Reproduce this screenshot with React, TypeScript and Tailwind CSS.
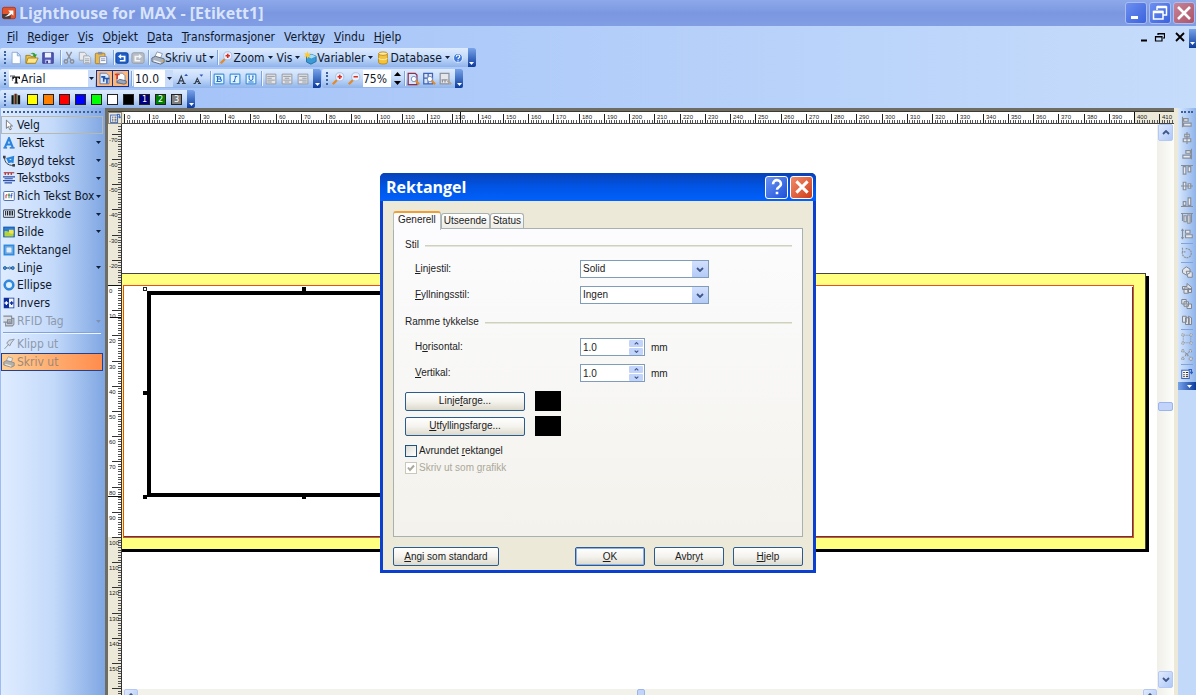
import { useState, type ReactNode } from "react";

const UI_FONT = "font-['DejaVu_Sans_Condensed','Noto_Sans',sans-serif]";

const menus = [
  ["", "F", "il"],
  ["", "R", "ediger"],
  ["", "V", "is"],
  ["", "O", "bjekt"],
  ["", "D", "ata"],
  ["", "T", "ransformasjoner"],
  ["Verkt", "ø", "y"],
  ["", "V", "indu"],
  ["", "H", "jelp"],
];

const tools = [
  { label: "Velg", icon: "pointer", active: true },
  { label: "Tekst", icon: "text", menu: true },
  { label: "Bøyd tekst", icon: "curved", menu: true },
  { label: "Tekstboks", icon: "textbox", menu: true },
  { label: "Rich Tekst Box", icon: "rtf", menu: true },
  { label: "Strekkode", icon: "barcode", menu: true },
  { label: "Bilde", icon: "image", menu: true },
  { label: "Rektangel", icon: "rect" },
  { label: "Linje", icon: "line", menu: true },
  { label: "Ellipse", icon: "ellipse" },
  { label: "Invers", icon: "invers" },
  { label: "RFID Tag", icon: "rfid", menu: true, disabled: true },
];

const swatches = [
  { name: "Gul", color: "bg-[#ffff00]" },
  { name: "Oransje", color: "bg-[#ff8000]" },
  { name: "Rød", color: "bg-[#ff0000]" },
  { name: "Blå", color: "bg-[#0000ff]" },
  { name: "Grønn", color: "bg-[#00ff00]" },
  { name: "Hvit", color: "bg-white" },
  { name: "Svart", color: "bg-black" },
  { name: "Farge 1", color: "bg-[#000080]", digit: "1" },
  { name: "Farge 2", color: "bg-[#008000]", digit: "2" },
  { name: "Farge 3", color: "bg-[#808080]", digit: "3" },
];

const rightTools = [
  "alignLeft", "alignCenter", "alignRight", "alignTop", "alignMiddle", "alignBottom", "spaceH", "spaceV", "|",
  "rotate", "|", "front", "forward", "backward", "back", "|", "group", "ungroup", "|", "props",
];

const drawings: Record<string, ReactNode> = {
  app: (
    <>
      <rect x="0.5" y="1.5" width="15" height="13" rx="2" fill="#e2552d" stroke="#a63a22" />
      <path d="M0 9h10v5.500H2L0 13z" fill="#4a3a38" />
      <path d="M3 12c3-1 5-3 6-5L7 5h6v6l-2-2c-2 2-5 3-8 3z" fill="#fff" />
    </>
  ),
  new: <path d="M3.500 1.500h6l3.500 3.500v9.500h-9.500zM9.500 1.500v4h3.500" fill="#fbfdff" stroke="#8aa6cf" />,
  open: (
    <>
      <path d="M1 5h5l1 1.500h5V14H1z" fill="#e8c24a" stroke="#9b7a1d" />
      <path d="M3.500 8H15l-3 6H1.500z" fill="#ffe58a" stroke="#a5821f" />
      <path d="M6 3c3-2 5-1 6 1h2l-3 3.500L8.500 4H10C9 3 8 3 6 3z" fill="#2ca02c" />
    </>
  ),
  save: (
    <>
      <path d="M2 2h12v12H2z" fill="#5258b8" stroke="#33378c" />
      <path d="M4.500 2h7v5.500h-7z" fill="#eef2ff" />
      <path d="M5 10h6v4H5z" fill="#d9dcf2" />
      <path d="M6 11h2v3H6z" fill="#33378c" />
    </>
  ),
  cut: (
    <g fill="none" stroke="#8a8f99" strokeWidth="1.600">
      <path d="M5 1l5 9M11 1L6 10" />
      <circle cx="4.500" cy="12" r="2" />
      <circle cx="11.500" cy="12" r="2" />
    </g>
  ),
  copy: (
    <g fill="#e8eaee" stroke="#9da3ad">
      <path d="M1.500 1.500h6l2 2v7h-8z" />
      <path d="M6.500 5.500h6l2 2v7h-8zM8 9h5M8 11h5M8 13h5" />
    </g>
  ),
  paste: (
    <>
      <rect x="1.500" y="2.500" width="11" height="12" rx="1" fill="#e9b94b" stroke="#a87a22" />
      <rect x="4.500" y="1" width="5" height="3" fill="#888fa5" />
      <path d="M6.500 6.500h8v8h-8zM8 9h5M8 11h5" fill="#fff" stroke="#7286b5" />
    </>
  ),
  undo: (
    <>
      <rect x="1" y="2" width="14" height="12" rx="2" fill="#1d5fc8" stroke="#0b3b96" />
      <path d="M7 3.500L3.500 6.200 7 9V7.200h3v3H5.500v1.800H12V5.300H7z" fill="#fff" />
    </>
  ),
  redo: (
    <>
      <rect x="1" y="2" width="14" height="12" rx="2" fill="#b9bec6" stroke="#9399a3" />
      <path d="M9 3.500l3.500 2.700L9 9V7.200H6v3h4.500v1.800H4V5.300h5z" fill="#f3f4f6" />
    </>
  ),
  printer: (
    <>
      <path d="M4 7l3-6 6 2-2 5z" fill="#fff" stroke="#8491aa" />
      <path d="M1 8l4-2 10 3v4l-4 2-10-3z" fill="#aab3c2" stroke="#5e6878" />
      <path d="M3 11l8 2.500" stroke="#f4f6fa" strokeWidth="1.500" />
      <circle cx="13" cy="11" r="1" fill="#e0a92a" />
    </>
  ),
  zoomIn: (
    <>
      <path d="M2 14l5-5" stroke="#e48a2b" strokeWidth="2.600" />
      <circle cx="10" cy="5.500" r="4.700" fill="#e6f0ff" stroke="#a9bbd8" />
      <path d="M10 3v5M7.500 5.500h5" stroke="#e02a1a" strokeWidth="1.800" />
    </>
  ),
  zoomOut: (
    <>
      <path d="M2 14l5-5" stroke="#e48a2b" strokeWidth="2.600" />
      <circle cx="10" cy="5.500" r="4.700" fill="#e6f0ff" stroke="#a9bbd8" />
      <path d="M7.500 5.500h5" stroke="#e02a1a" strokeWidth="1.800" />
    </>
  ),
  cube: (
    <>
      <path d="M4 6l6-2 5 2v6l-6 3-5-2.500z" fill="#3c9ad6" stroke="#1f6ea6" />
      <path d="M4 6l5.500 2.500L15 6l-5-2z" fill="#a5def5" />
      <path d="M5 0l1 3 3-1-2 3 2 2-3-.5L5 9 4 6 1 7l2-2.500L1 2l3 1z" fill="#ffc928" />
    </>
  ),
  db: (
    <>
      <path d="M3 3v10c0 2.500 10 2.500 10 0V3z" fill="#f4c33a" stroke="#b98613" />
      <ellipse cx="8" cy="3" rx="5" ry="2" fill="#ffeaa0" stroke="#b98613" />
      <path d="M3 8c0 2.500 10 2.500 10 0" fill="none" stroke="#fff1b8" />
    </>
  ),
  help: (
    <>
      <circle cx="8" cy="8" r="6" fill="#3f78d8" stroke="#dbe8fc" strokeWidth="1.500" />
      <path d="M5.800 6.200c0-3 4.600-2.800 4.600 0 0 1.600-2.300 1.600-2.300 3.300M8 11v1.500" fill="none" stroke="#fff" strokeWidth="1.600" />
    </>
  ),
  fontType: (
    <>
      <path d="M0 2h8v3H7L6 4H5v7H3V4H2L1 5H0z" fill="#8b9099" />
      <path d="M4 4h12v4h-1.500L13 6h-1.500v7.500H13V15H7v-1.500h1.500V6H7L5.500 8H4z" fill="#111" />
    </>
  ),
  fontPage: (
    <>
      <path d="M2.500 1.500h8l3 3v10h-11z" fill="#dfeaff" stroke="#4a73b9" />
      <path d="M4 5h5v2H8v5H6V7H4zM8 7h6v2h-2v5h-2V9H8z" fill="#2456a8" />
    </>
  ),
  fontPrint: (
    <>
      <path d="M3.500 1.500h7l3 3v9h-10z" fill="#fff" stroke="#6a7fae" />
      <path d="M1 2h6v2H5v5H3V4H1z" fill="#d33b24" />
      <path d="M4 11l3-2 8 2v3l-3 1-8-2z" fill="#9aa6ba" stroke="#50607c" />
    </>
  ),
  grow: (
    <>
      <path d="M1 14h4M8 14h5M3 14L7 4l4 10M5 10.500h4.500" stroke="#333b4a" strokeWidth="1.600" fill="none" />
      <path d="M11 4l2.500-3L16 4z" fill="#2c57b5" />
    </>
  ),
  shrink: (
    <>
      <path d="M2 14h3M8 14h4M4 14L7 7l3.500 7M5.500 11.500h3.500" stroke="#333b4a" strokeWidth="1.400" fill="none" />
      <path d="M10 2h5l-2.500 3z" fill="#2c57b5" />
    </>
  ),
  bold: (
    <>
      <rect x="1.500" y="1.500" width="13" height="13" rx="1" fill="#e6f3ff" stroke="#3f93dd" strokeWidth="1.600" />
      <path d="M6 4.500v7M6 5h2.500c2.500 0 2.500 3 0 3H6h3c3 0 3 3.300 0 3.300H6M4.500 4.700h2M4.500 11.300h2" fill="none" stroke="#1f6fc4" strokeWidth="1.500" />
    </>
  ),
  italic: (
    <>
      <rect x="1.500" y="1.500" width="13" height="13" rx="1" fill="#e6f3ff" stroke="#3f93dd" strokeWidth="1.600" />
      <path d="M9 4.500l-2 7M7.500 4.500h3.500M5 11.500h3.500" fill="none" stroke="#1f6fc4" strokeWidth="1.300" />
    </>
  ),
  underline: (
    <>
      <rect x="1.500" y="1.500" width="13" height="13" rx="1" fill="#e6f3ff" stroke="#3f93dd" strokeWidth="1.600" />
      <path d="M5.500 4v4c0 2.500 5 2.500 5 0V4M4.500 12h7M4.500 4h2M9.500 4h2" fill="none" stroke="#1f6fc4" strokeWidth="1.300" />
    </>
  ),
  left: <path d="M1.500 1.500h13v13h-13zM3 4.500h10M3 7h6M3 9.500h10M3 12h6" fill="#e3e5e9" stroke="#8f949e" strokeWidth="1.200" />,
  center: <path d="M1.500 1.500h13v13h-13zM3 4.500h10M5 7h6M3 9.500h10M5 12h6" fill="#e3e5e9" stroke="#8f949e" strokeWidth="1.200" />,
  right: <path d="M1.500 1.500h13v13h-13zM3 4.500h10M7 7h6M3 9.500h10M7 12h6" fill="#e3e5e9" stroke="#8f949e" strokeWidth="1.200" />,
  fitPage: (
    <>
      <path d="M2.500 1.500h8l2 2v11h-10z" fill="#dbe6fb" stroke="#8a2f4c" strokeWidth="1.400" />
      <circle cx="9" cy="8" r="3" fill="#fff" stroke="#6c86bd" />
      <path d="M11 10l4 4" stroke="#e08a2a" strokeWidth="2.500" />
    </>
  ),
  fitObjects: (
    <>
      <path d="M2 1.500h10v12H2zM2 7h10M7 2v11" fill="#dbe6fb" stroke="#3d62b4" strokeWidth="1.400" />
      <circle cx="9" cy="8" r="3" fill="#fff" stroke="#6c86bd" />
      <path d="M11 10l4 4" stroke="#e08a2a" strokeWidth="2.500" />
    </>
  ),
  fitOff: (
    <>
      <path d="M2.500 1.500h10v12h-10zM4 9h7M5 9v3M8 9v3" fill="#e4e6ea" stroke="#8f939c" strokeWidth="1.400" />
      <path d="M11 10l4 4" stroke="#b0a698" strokeWidth="2.500" />
    </>
  ),
  pens: (
    <g strokeWidth="3">
      <path d="M3.500 3v12" stroke="#111" />
      <path d="M7.500 1v14" stroke="#7a1111" />
      <path d="M12 3v12" stroke="#111" />
      <path d="M5.500 2v13M10 2v13" stroke="#2d8a3a" strokeWidth="1" />
    </g>
  ),
  pointer: <path d="M4.500 1.500v11l2.700-2.500 2 4.500 2-1-2-4.200h3.500z" fill="#fff" stroke="#555" />,
  text: (
    <>
      <path d="M0.500 14.500h5M9 14.500h6.500" stroke="#1766c0" strokeWidth="1.600" />
      <path d="M2.500 14L8 1.500 13 14M4.500 10h7" fill="none" stroke="#2a86dd" strokeWidth="2.800" />
    </>
  ),
  curved: (
    <>
      <path d="M2 3c0 7 4 11 12 11" fill="none" stroke="#3a4148" strokeWidth="1.300" />
      <rect x="0" y="1" width="3.500" height="3.500" fill="#3a4148" />
      <rect x="12.500" y="12" width="3.500" height="3.500" fill="#3a4148" />
      <path d="M4 4l11-3-1 10-3-1-4 1-1-3z" fill="#2a86dd" />
      <path d="M8 6l3-1v2z" fill="#d8ecff" />
    </>
  ),
  textbox: (
    <>
      <path d="M1 1h14M3 1v3M7 1v3M11 1v3" stroke="#a5262c" strokeWidth="1.500" />
      <path d="M0 6.500h16M2 9h11M0 11.500h16M2 14.500h10" stroke="#2b4fa8" strokeWidth="1.500" />
    </>
  ),
  rtf: (
    <>
      <rect x="1" y="2" width="14" height="12" rx="1" fill="#fff" stroke="#4a6fb0" strokeWidth="1.300" />
      <path d="M4 11V6.500h2" fill="none" stroke="#c4302b" strokeWidth="1.300" />
      <path d="M8 4.500V11M6.800 6.800h2.500" stroke="#257a33" strokeWidth="1.200" />
      <path d="M11 11V5h2M10 7.500h2.500" fill="none" stroke="#2b55c0" strokeWidth="1.200" />
    </>
  ),
  barcode: (
    <>
      <rect x="0.700" y="2.500" width="14.600" height="10" rx="1" fill="#e5ebf5" stroke="#4e5a72" strokeWidth="1.400" />
      <path d="M3.500 4v6M6 4v6M8.500 4v6M10.500 4v6M12.700 4v6" stroke="#20262f" strokeWidth="1.400" />
    </>
  ),
  image: (
    <>
      <rect x="1" y="1.500" width="14" height="13" fill="#2a7ed8" stroke="#1253a5" strokeWidth="1.300" />
      <path d="M2 7c4-2 7 3 12-1v8H2z" fill="#b5d33d" />
      <path d="M8 5h6v5c-2 1-4 0-6-1z" fill="#f4e14b" />
    </>
  ),
  rect: (
    <>
      <rect x="2" y="2" width="12" height="12" fill="#dceeff" stroke="#2f8ce0" strokeWidth="2.600" />
      <rect x="4" y="4" width="8" height="8" fill="none" stroke="#1c5fae" strokeWidth="0.700" />
    </>
  ),
  line: (
    <>
      <path d="M2 8h12" stroke="#1f5fa8" strokeWidth="1.500" />
      <circle cx="2.500" cy="8" r="2" fill="#3f93dd" stroke="#174c8c" />
      <circle cx="13" cy="8" r="2" fill="#3f93dd" stroke="#174c8c" />
      <circle cx="9" cy="8" r="1.400" fill="#fff" stroke="#174c8c" />
    </>
  ),
  ellipse: (
    <>
      <circle cx="8" cy="8" r="5.500" fill="#e3f2ff" stroke="#2f8ce0" strokeWidth="3" />
      <circle cx="8" cy="8" r="7" fill="none" stroke="#1c6ec2" strokeWidth="0.700" />
    </>
  ),
  invers: (
    <>
      <rect x="1" y="1" width="14" height="14" fill="#0c2f9c" />
      <path d="M8 2h6v12H8z" fill="#f3f7ff" />
      <path d="M2 8h5M4.500 5.500v5" stroke="#fff" strokeWidth="1.700" />
      <path d="M9 8h5M11.500 5.500v5" stroke="#0c2f9c" strokeWidth="1.700" />
    </>
  ),
  rfid: (
    <g fill="#d8dde6" stroke="#838b98" strokeWidth="1.400">
      <path d="M3.500 4.500h11v8l-2 2h-9z" />
      <path d="M0.500 1.500h11v8H0.500M6 6.500h6v5H6zM8 9h2" />
    </g>
  ),
  clip: <path d="M2 14.500L8 8M5 7l3-4 7-1.500-4 5-2 4z" fill="#d5dbe6" stroke="#8d96a4" strokeWidth="1.300" />,
  printOff: (
    <>
      <path d="M4 7l3-6 6 2-2 5z" fill="#eceae6" stroke="#9a9a9a" />
      <path d="M1 8l4-2 10 3v4l-4 2-10-3z" fill="#b4b0aa" stroke="#858585" />
      <path d="M3 11l8 2.500" stroke="#ece8e2" strokeWidth="1.500" />
    </>
  ),
  alignLeft: <path d="M2 1v14M3.500 3.500h6v3.500h-6zM3.500 9.500h10v4h-10z" fill="#e6e9ee" stroke="#868d99" strokeWidth="1.500" />,
  alignCenter: <path d="M8 0v16M5 3h6v3.500H5zM3 9h10v4H3z" fill="#e6e9ee" stroke="#868d99" strokeWidth="1.500" />,
  alignRight: <path d="M14 1v14M6.500 3.500h6v3.500h-6zM2.500 9.500h10v4h-10z" fill="#e6e9ee" stroke="#868d99" strokeWidth="1.500" />,
  alignTop: <path d="M0 2h16M3 3.500h3.500v10H3zM9.500 3.500H13v7H9.500z" fill="#e6e9ee" stroke="#868d99" strokeWidth="1.500" />,
  alignMiddle: <path d="M0 8h16M3 3h3.500v10H3zM9.500 5H13v6H9.500z" fill="#e6e9ee" stroke="#868d99" strokeWidth="1.500" />,
  alignBottom: <path d="M0 14h16M3 7.500h3.500v5H3zM9.500 2.500H13v10H9.500z" fill="#e6e9ee" stroke="#868d99" strokeWidth="1.500" />,
  spaceH: <path d="M0 2h16M2 2v10M14 2v12M4 5h3v8H4zM9 4h3v11H9z" fill="#e6e9ee" stroke="#868d99" strokeWidth="1.500" />,
  spaceV: <path d="M2 1v14M0 3h4M0 13h4M6 3h6v4H6zM6 9h9v4H6z" fill="#e6e9ee" stroke="#868d99" strokeWidth="1.500" />,
  rotate: <path d="M2 6.500a6 6 0 1 0 4-4M2 1v5.500h5" fill="none" stroke="#8a919d" strokeWidth="1.500" strokeDasharray="2.500 1" />,
  front: <path d="M2 5l5-4 5 3v5l-5 3-5-3zM7 7h6l2 2v6H9z" fill="#e2e5ea" stroke="#7d8490" strokeWidth="1.300" />,
  forward: <path d="M2 6h6V2l6 5v3H2zM4 8h6v7H4zM9 9h5v5H9z" fill="#e2e5ea" stroke="#7d8490" strokeWidth="1.300" />,
  backward: <path d="M1 2h6v6H1zM4 5h6v6H4zM8 8h6v6H8z" fill="#e2e5ea" stroke="#7d8490" strokeWidth="1.300" />,
  back: <path d="M2 3h5v8H2zM6 5h5v9H6zM10 3l4 2v9h-4z" fill="#e2e5ea" stroke="#7d8490" strokeWidth="1.300" />,
  group: <path d="M1 1h3v3H1zM12 1h3v3h-3zM1 12h3v3H1zM12 12h3v3h-3zM4 3h8M3 4v8M13 4v8M4 13h8" fill="#d5dae2" stroke="#8a919d" strokeDasharray="2 1" />,
  ungroup: <path d="M1 1h3v3H1zM11 1h3v3h-3zM1 11h3v3H1zM6 6h3v3H6zM11 11h4v4h-4zM5 4l6 6M11 4l-6 6" fill="#d5dae2" stroke="#7d8490" strokeDasharray="3 1" />,
  props: (
    <>
      <rect x="1" y="3" width="10" height="11" fill="#fff" stroke="#3d66b8" strokeWidth="1.400" />
      <path d="M3 6h2M3 9h2M3 11.500h2M6.500 6h3M6.500 9h3M6.500 11.500h3" stroke="#222" strokeWidth="1.300" />
      <path d="M10 2h4v5M12 5l2 2.500L16 5" fill="none" stroke="#2b5cc2" strokeWidth="1.400" />
    </>
  ),
};

function Icon({ name, className = "size-[14px]" }: { name: string; className?: string }) {
  return (
    <svg viewBox="0 0 16 16" className={`${className} shrink-0`} aria-hidden="true">
      {drawings[name]}
    </svg>
  );
}

function Caret({ className = "text-[#10203c]" }: { className?: string }) {
  return (
    <svg viewBox="0 0 5 3" className={`${className} h-[3px] w-[5px] shrink-0`} aria-hidden="true">
      <path d="M0 0h5L2.500 3z" fill="currentColor" />
    </svg>
  );
}

function ToolButton({ name, label, small = false }: { name: string; label: string; small?: boolean }) {
  return (
    <button aria-label={label} className="flex h-4 w-4 shrink-0 items-center justify-center">
      <Icon name={name} className={small ? "size-[12px]" : "size-[14px]"} />
    </button>
  );
}

function LabelButton({ icon, children }: { icon?: string; children: ReactNode }) {
  return (
    <button className="flex h-4 shrink-0 items-center whitespace-nowrap">
      {icon && <Icon name={icon} />}
      <span className="mr-[3px]">{children}</span>
      <Caret />
    </button>
  );
}

function Separator() {
  return <span className="h-[15px] w-px shrink-0 bg-[#7fa3dc] shadow-[1px_0_0_#eef5ff]" />;
}

function Grip() {
  return <span className="mr-[2px] h-[13px] shrink-0 border-l-2 border-dotted border-[#3c5f9e]" />;
}

function Toolbar({ label, children }: { label: string; children: ReactNode }) {
  return (
    <div
      role="toolbar"
      aria-label={label}
      className="flex h-full items-stretch overflow-hidden rounded-[2px] bg-gradient-to-b from-[#deebfd] via-[#c3dafa] to-[#8fb3ea]"
    >
      <div className="flex items-center pl-1">{children}</div>
      <button
        aria-label="Flere knapper"
        className="ml-[2px] flex w-2 items-end justify-center bg-gradient-to-b from-[#79a4ea] to-[#0b3a9b] pb-[2px] text-white"
      >
        <Caret className="text-white" />
      </button>
    </div>
  );
}

function Hot({ parts }: { parts: string[] }) {
  return (
    <>
      {parts[0]}
      <u className="underline-offset-1">{parts[1]}</u>
      {parts[2]}
    </>
  );
}

function TopRuler() {
  const origin = 2;
  const unit = 2.525;
  const ticks = Array.from({ length: 600 }, (_, i) => i);
  return (
    <svg className="h-[12px] min-w-0 flex-1" aria-hidden="true" shapeRendering="crispEdges">
      <rect width="100%" height="12" fill="#ece9d8" />
      <rect x={origin} width={unit * 400} height="12" fill="#fff" />
      {ticks.map((i) => (
        <path key={i} d={`M${Math.round(origin + i * unit)}.5 ${i % 10 === 0 ? 2 : 8}V11`} stroke={i % 10 === 0 ? "#222" : "#555"} />
      ))}
      {ticks
        .filter((i) => i % 10 === 0 && i <= 410)
        .map((i) => (
          <text key={i} x={Math.round(origin + i * unit) + 3} y="7" fontSize="6" fill="#222" className="font-['Liberation_Sans',sans-serif]">
            {i}
          </text>
        ))}
      <path d={`M${origin + unit * 400} 0V12M338.5 0V11`} stroke="#111" />
      <path d="M0 11.500H3000" stroke="#444" />
    </svg>
  );
}

function SideRuler() {
  const origin = 161;
  const unit = 2.52;
  const ticks = Array.from({ length: 500 }, (_, i) => i - 63);
  return (
    <svg className="h-full w-[14px] shrink-0" aria-hidden="true" shapeRendering="crispEdges">
      <rect width="14" height="100%" fill="#ece9d8" />
      <rect y={origin} width="14" height={unit * 100} fill="#fff" />
      {ticks.map((i) => (
        <path key={i} d={`M${i % 10 === 0 ? 4 : 10} ${Math.round(origin + i * unit)}.5H13`} stroke={i % 10 === 0 ? "#333" : "#555"} />
      ))}
      {ticks
        .filter((i) => i % 10 === 0 && i <= 150)
        .map((i) => (
          <text key={i} x="1" y={Math.round(origin + i * unit) + 8} fontSize="6" fill="#222" className="font-['Liberation_Sans',sans-serif]">
            {i < 0 ? i - 10 : i}
          </text>
        ))}
      <path d={`M0 ${origin}.5H14M2 ${origin + 32}.5H14M0 ${origin + 211}.5H14`} stroke="#111" />
      <path d="M13.500 0V3000" stroke="#333" />
    </svg>
  );
}

// The label sheet with the selected rectangle and its handles
function LabelSheet() {
  return (
    <svg className="absolute left-0 top-0 h-[430px] w-[1030px]" role="img" aria-label="Etikett1" shapeRendering="crispEdges">
      <rect x="0" y="152" width="1027" height="276" fill="#000" />
      <rect x="0" y="150" width="1023" height="275" fill="#ffff80" />
      <path d="M0 149.500H1023.500V425" fill="none" stroke="#444" />
      <rect x="2" y="162" width="1010" height="251" fill="#fff" />
      <path d="M2 412.500H1010.500V163" fill="none" stroke="#444" />
      <rect x="1.500" y="161.500" width="1010" height="252" fill="none" stroke="#f04a24" />
      <rect x="26.500" y="168.500" width="312" height="202" fill="none" stroke="#000" strokeWidth="4" />
      <rect x="21.500" y="163.500" width="3" height="3" fill="#fff" stroke="#222" />
      <rect x="180" y="163" width="4" height="4" />
      <rect x="21" y="267" width="4" height="4" />
      <rect x="21" y="371" width="4" height="4" />
      <rect x="180" y="371" width="4" height="4" />
    </svg>
  );
}

function Chevron({ up = false, className = "h-[5px] w-[8px]" }: { up?: boolean; className?: string }) {
  return (
    <svg viewBox="0 0 8 5" className={className} aria-hidden="true">
      <path d={up ? "M1 4l3-3 3 3" : "M1 1l3 3 3-3"} fill="none" stroke="#3f5788" strokeWidth="1.800" />
    </svg>
  );
}

const scrollButton = "flex items-center justify-center rounded-[2px] border border-[#b3c8f5] bg-gradient-to-br from-[#e1eafe] to-[#aec8f7]";

function GroupTitle({ children }: { children: ReactNode }) {
  return (
    <div className="flex h-4 items-center gap-[6px]">
      <h2>{children}</h2>
      <span className="h-px flex-1 bg-[#d0d0bf] shadow-[0_1px_0_#e6e5da]" />
    </div>
  );
}

function DropDown({ id, label, options }: { id: string; label: string[]; options: string[] }) {
  return (
    <div className="flex h-[18px] items-center pl-[10px]">
      <label htmlFor={id} className="w-[165px]">
        <Hot parts={label} />
      </label>
      <div className="relative">
        <select id={id} className="block h-[18px] w-[129px] appearance-none border border-[#7f9db9] bg-white pl-[2px] pr-5 outline-none">
          {options.map((o) => (
            <option key={o}>{o}</option>
          ))}
        </select>
        <span className="pointer-events-none absolute inset-y-px right-px flex w-4 items-center justify-center bg-gradient-to-b from-[#d3e0fd] to-[#b4cbf7]">
          <Chevron />
        </span>
      </div>
    </div>
  );
}

function Spinner({ id, label }: { id: string; label: string[] }) {
  const [value, setValue] = useState(1);
  const arrow = "flex h-[7px] w-[14px] items-center justify-center rounded-[1px] bg-[#c3d4fb]";
  return (
    <div className="flex h-[18px] items-center pl-[10px]">
      <label htmlFor={id} className="w-[165px]">
        <Hot parts={label} />
      </label>
      <div className="flex h-[18px] w-[65px] items-center border border-[#7f9db9] bg-white pr-px">
        <input
          id={id}
          value={value.toFixed(1)}
          onChange={(e) => setValue(Number(e.target.value) || 0)}
          className="h-full min-w-0 flex-1 bg-transparent pl-[2px] outline-none"
        />
        <div className="flex flex-col gap-px">
          <button aria-label="Øk" onClick={() => setValue(value + 0.5)} className={arrow}>
            <Chevron up className="h-[3px] w-[5px]" />
          </button>
          <button aria-label="Reduser" onClick={() => setValue(Math.max(0, value - 0.5))} className={arrow}>
            <Chevron className="h-[3px] w-[5px]" />
          </button>
        </div>
      </div>
      <span className="ml-[6px] pt-[2px]">mm</span>
    </div>
  );
}

const xpButton = "h-[19px] rounded-[2px] border border-[#2c5b8e] bg-gradient-to-b from-white via-[#f4f3ee] to-[#dcd9cc] text-center";

function RectangleDialog() {
  const [tab, setTab] = useState("Generell");
  return (
    <div
      role="dialog"
      aria-label="Rektangel"
      className="absolute left-1/2 top-[173px] z-10 w-[436px] -translate-x-1/2 rounded-t-[5px] bg-[#0a3fd0] px-[3px] pb-[3px] font-['Liberation_Sans',sans-serif] text-[10px] leading-3 text-[#1c1c1c]"
    >
      <div className="-mx-[3px] flex h-[28px] items-center justify-between rounded-t-[5px] bg-gradient-to-b from-[#0842b8] via-[#0055e5] to-[#0061fc] pl-[6px] pr-[3px]">
        <h1 className="font-['Open_Sans',sans-serif] text-base font-bold text-white">Rektangel</h1>
        <div className="flex gap-[2px]">
          <button aria-label="Hjelp" className="flex size-[23px] items-center justify-center rounded-[3px] border border-white bg-gradient-to-br from-[#6b93f2] to-[#1c4fd8]">
            <svg viewBox="0 0 16 16" className="size-[18px]" aria-hidden="true">
              <path d="M4.500 5.500c0-5 7-4.600 7 0 0 2.500-3.500 2.500-3.500 5M8 12.200v2.300" fill="none" stroke="#fff" strokeWidth="2.300" />
            </svg>
          </button>
          <button aria-label="Lukk" className="flex size-[23px] items-center justify-center rounded-[3px] border border-white bg-gradient-to-br from-[#f08a68] to-[#cf3a12]">
            <svg viewBox="0 0 16 16" className="size-[18px]" aria-hidden="true">
              <path d="M3 3l10 10M13 3L3 13" stroke="#fff" strokeWidth="2.600" />
            </svg>
          </button>
        </div>
      </div>

      <div className="bg-[#ece9d8] px-[10px] pb-1 pt-[10px]">
        <div role="tablist" className="flex h-[17px] items-end">
          {["Generell", "Utseende", "Status"].map((t) => (
            <button
              key={t}
              role="tab"
              aria-selected={tab === t}
              onClick={() => setTab(t)}
              className={
                tab === t
                  ? "relative -mb-[2px] h-[19px] rounded-t-[3px] border border-b-0 border-t-2 border-[#b5bdbe] border-t-[#f0a030] bg-[#fcfcfe] px-1 pb-[3px]"
                  : "h-[15px] rounded-t-[3px] border border-b-0 border-[#a8b1b2] bg-gradient-to-b from-white to-[#ecebe5] px-[2px]"
              }
            >
              {t}
            </button>
          ))}
        </div>

        <div role="tabpanel" className="min-h-[309px] border border-[#a8b1b2] bg-gradient-to-b from-[#fcfcfe] to-[#f3f2ec] pb-4 pl-[11px] pr-[10px] pt-2">
          <GroupTitle>Stil</GroupTitle>
          <div className="mt-[7px] flex flex-col gap-2">
            <DropDown id="line-style" label={["", "L", "injestil:"]} options={["Solid", "Ingen"]} />
            <DropDown id="fill-style" label={["", "F", "yllningsstil:"]} options={["Ingen", "Solid"]} />
          </div>

          <div className="mt-[10px]">
            <GroupTitle>Ramme tykkelse</GroupTitle>
          </div>
          <div className="mt-2 flex flex-col gap-2">
            <Spinner id="horizontal" label={["H", "o", "risontal:"]} />
            <Spinner id="vertical" label={["", "V", "ertikal:"]} />
          </div>

          <div className="mt-[9px] flex flex-col gap-[5px]">
            <div className="flex items-center gap-[10px]">
              <button className={`${xpButton} w-[120px]`}>
                <Hot parts={["Linje", "f", "arge..."]} />
              </button>
              <span className="h-[20px] w-[26px] bg-black" />
            </div>
            <div className="flex items-center gap-[10px]">
              <button className={`${xpButton} w-[120px]`}>
                <Hot parts={["", "U", "tfyllingsfarge..."]} />
              </button>
              <span className="h-[20px] w-[26px] bg-black" />
            </div>
          </div>

          <div className="mt-[7px] flex flex-col gap-px">
            <label className="flex h-4 items-center gap-[2px]">
              <input type="checkbox" className="size-3 appearance-none border border-[#1c5180] bg-gradient-to-br from-[#dcdcd7] to-white checked:bg-[#21a121]" />
              <span>
                <Hot parts={["Avrundet ", "r", "ektangel"]} />
              </span>
            </label>
            <label className="flex h-4 items-center gap-[2px] text-[#aca899]">
              <span className="relative flex">
                <input type="checkbox" checked disabled readOnly className="size-3 appearance-none border border-[#cac8bb] bg-white" />
                <svg viewBox="0 0 12 12" className="pointer-events-none absolute inset-0" aria-hidden="true">
                  <path d="M3 5.500l2 2.500 4-4.500" fill="none" stroke="#aca899" strokeWidth="2" />
                </svg>
              </span>
              <span>
                <Hot parts={["Skriv ut som ", "g", "rafikk"]} />
              </span>
            </label>
          </div>
        </div>

        <div className="mt-[10px] flex gap-[9px]">
          <button className={`${xpButton} mr-auto w-[106px]`}>
            <Hot parts={["", "A", "ngi som standard"]} />
          </button>
          <button className={`${xpButton} w-[70px] shadow-[inset_0_0_0_1px_#8fb0ee]`}>
            <Hot parts={["", "O", "K"]} />
          </button>
          <button className={`${xpButton} w-[70px]`}>Avbryt</button>
          <button className={`${xpButton} w-[70px]`}>
            <Hot parts={["", "H", "jelp"]} />
          </button>
        </div>
      </div>
    </div>
  );
}

const windowButton = "flex size-[22px] items-center justify-center rounded-[3px] border border-[#a9bdf2]";

export default function App() {
  const [zoom, setZoom] = useState(75);

  return (
    <div className={`relative flex h-screen flex-col overflow-hidden bg-[#c3d9fa] text-xs leading-4 text-[#10182c] ${UI_FONT}`}>
      {/* Title bar */}
      <header className="flex h-[26px] shrink-0 items-center bg-gradient-to-b from-[#8ea9ea] via-[#7b97e0] to-[#819de4] pl-[2px] pr-px">
        <Icon name="app" />
        <h1 className="ml-[3px] flex-1 font-['Open_Sans',sans-serif] text-base font-bold text-[#d8e4fc]">
          Lighthouse for MAX - [Etikett1]
        </h1>
        <div className="flex gap-[2px]">
          <button aria-label="Minimer" className={`${windowButton} bg-gradient-to-br from-[#6d8ff0] to-[#3b62dc]`}>
            <svg viewBox="0 0 16 16" className="size-4" aria-hidden="true">
              <path d="M3 12.500h7" stroke="#fff" strokeWidth="3" />
            </svg>
          </button>
          <button aria-label="Gjenopprett" className={`${windowButton} bg-gradient-to-br from-[#6d8ff0] to-[#3b62dc]`}>
            <svg viewBox="0 0 16 16" className="size-4" aria-hidden="true">
              <path d="M5 5V2h9.500v8H11M1.500 6.500H11v7.500H1.500z" fill="none" stroke="#fff" strokeWidth="1.500" />
              <path d="M5 2h9.500M1.500 7H11" stroke="#fff" strokeWidth="2.500" />
            </svg>
          </button>
          <button aria-label="Avslutt" className={`${windowButton} bg-gradient-to-br from-[#c78398] to-[#ab5468]`}>
            <svg viewBox="0 0 16 16" className="size-4" aria-hidden="true">
              <path d="M2 2l12 12M14 2L2 14" stroke="#fff" strokeWidth="2.600" />
            </svg>
          </button>
        </div>
      </header>

      {/* Menu and toolbars */}
      <div className="shrink-0 bg-gradient-to-r from-[#9fbff7] to-[#c6dcfb]">
        <nav className="flex h-[22px] items-center justify-between pl-[7px]">
          <div className="flex gap-[9px]">
            {menus.map((m) => (
              <button key={m.join("")}>
                <Hot parts={m} />
              </button>
            ))}
          </div>
          <div className="flex h-full items-center gap-1">
            <button aria-label="Minimer dokument">
              <svg viewBox="0 0 12 12" className="size-3" aria-hidden="true">
                <path d="M4 9.500h6" stroke="#000" strokeWidth="2" />
              </svg>
            </button>
            <button aria-label="Gjenopprett dokument">
              <svg viewBox="0 0 12 12" className="size-3" aria-hidden="true">
                <path d="M5 4V2.500h6.500V7H10M2.500 5.500h6.500v4.500H2.500zM2.500 6h6.500M5 3h6.500" fill="none" stroke="#000" strokeWidth="1.200" />
              </svg>
            </button>
            <button aria-label="Lukk dokument" className="ml-1">
              <svg viewBox="0 0 12 12" className="size-3" aria-hidden="true">
                <path d="M3 2l8 8M11 2l-8 8" stroke="#000" strokeWidth="1.800" />
              </svg>
            </button>
            <button aria-label="Flere menyer" className="flex h-[19px] w-[7px] items-end justify-center self-end bg-gradient-to-b from-[#79a4ea] to-[#0b3a9b] pb-[3px]">
              <Caret className="text-white" />
            </button>
          </div>
        </nav>

        <div className="flex flex-col gap-[2px]">
          <div className="flex h-[19px]">
            <Toolbar label="Standard">
              <Grip />
              <ToolButton name="new" label="Ny" />
              <ToolButton name="open" label="Åpne" />
              <ToolButton name="save" label="Lagre" />
              <span className="w-1" />
              <Separator />
              <ToolButton name="cut" label="Klipp ut" />
              <ToolButton name="copy" label="Kopier" />
              <ToolButton name="paste" label="Lim inn" />
              <span className="w-1" />
              <Separator />
              <ToolButton name="undo" label="Angre" />
              <ToolButton name="redo" label="Gjør om" />
              <span className="w-[2px]" />
              <Separator />
              <span className="w-[2px]" />
              <LabelButton icon="printer">Skriv ut</LabelButton>
              <span className="w-[3px]" />
              <Separator />
              <span className="w-px" />
              <LabelButton icon="zoomIn">Zoom</LabelButton>
              <span className="w-1" />
              <LabelButton>Vis</LabelButton>
              <span className="w-[3px]" />
              <LabelButton icon="cube">Variabler</LabelButton>
              <span className="w-[3px]" />
              <LabelButton icon="db">Database</LabelButton>
              <ToolButton name="help" label="Hjelp" small />
            </Toolbar>
          </div>

          <div className="flex h-[19px] gap-px">
            <Toolbar label="Skrift">
              <Grip />
              <div className="relative mx-px flex h-[17px] items-center bg-white">
                <span className="pointer-events-none absolute left-px">
                  <Icon name="fontType" className="size-[10px]" />
                </span>
                <select aria-label="Skrifttype" className="h-[17px] w-[86px] appearance-none bg-transparent pl-3 outline-none">
                  <option>Arial</option>
                  <option>Tahoma</option>
                </select>
                <span className="pointer-events-none absolute right-0 flex h-[17px] w-[7px] items-center justify-center bg-[#c8dcfa]">
                  <Caret />
                </span>
              </div>
              <button aria-label="Skjermskrift" className="flex h-[17px] w-[17px] items-center justify-center border border-[#1b2f84] bg-[#fdb779]">
                <Icon name="fontPage" className="size-[13px]" />
              </button>
              <button aria-label="Skriverskrift" className="-ml-px flex h-[17px] w-[17px] items-center justify-center border border-[#1b2f84] bg-[#fdb779]">
                <Icon name="fontPrint" className="size-[13px]" />
              </button>
              <span className="w-[2px]" />
              <Separator />
              <div className="relative ml-[2px] mr-px flex h-[17px] items-center bg-white">
                <select aria-label="Skriftstørrelse" className="h-[17px] w-[39px] appearance-none bg-transparent pl-px outline-none">
                  <option>10.0</option>
                  <option>12.0</option>
                </select>
                <span className="pointer-events-none absolute right-0 flex h-[17px] w-[8px] items-center justify-center bg-[#c8dcfa]">
                  <Caret />
                </span>
              </div>
              <ToolButton name="grow" label="Større skrift" small />
              <ToolButton name="shrink" label="Mindre skrift" small />
              <span className="w-1" />
              <Separator />
              <ToolButton name="bold" label="Fet" small />
              <ToolButton name="italic" label="Kursiv" small />
              <ToolButton name="underline" label="Understreket" small />
              <span className="w-[2px]" />
              <Separator />
              <span className="w-px" />
              <ToolButton name="left" label="Venstrestill" small />
              <ToolButton name="center" label="Midtstill" small />
              <ToolButton name="right" label="Høyrestill" small />
            </Toolbar>
            <Toolbar label="Zoom">
              <Grip />
              <ToolButton name="zoomIn" label="Zoom inn" />
              <ToolButton name="zoomOut" label="Zoom ut" />
              <span className="w-px" />
              <input
                aria-label="Zoomnivå"
                value={`${zoom}%`}
                onChange={(e) => setZoom(parseInt(e.target.value) || 0)}
                className="h-[17px] w-[28px] bg-white outline-none"
              />
              <div className="mx-px flex w-[11px] flex-col items-center gap-[5px] text-black">
                <button aria-label="Øk zoom" onClick={() => setZoom(zoom + 5)} className="rotate-180">
                  <svg viewBox="0 0 7 4" className="block h-1 w-[7px]"><path d="M0 0h7L3.500 4z" /></svg>
                </button>
                <button aria-label="Reduser zoom" onClick={() => setZoom(zoom - 5)}>
                  <svg viewBox="0 0 7 4" className="block h-1 w-[7px]"><path d="M0 0h7L3.500 4z" /></svg>
                </button>
              </div>
              <Separator />
              <ToolButton name="fitPage" label="Vis hele siden" />
              <ToolButton name="fitObjects" label="Vis objekter" />
              <ToolButton name="fitOff" label="Vis bredde" />
            </Toolbar>
          </div>

          <div className="flex h-[18px]">
            <Toolbar label="Farger">
              <Grip />
              <ToolButton name="pens" label="Farger" small />
              <div className="flex gap-[5px] px-[3px]">
                {swatches.map((s) => (
                  <button
                    key={s.name}
                    aria-label={s.name}
                    className={`${s.color} flex size-[11px] items-center justify-center border border-[#222] text-[9px] leading-none text-white`}
                  >
                    {s.digit}
                  </button>
                ))}
              </div>
            </Toolbar>
          </div>
        </div>
      </div>

      <div className="flex min-h-0 flex-1">
        {/* Drawing tools */}
        <aside className="w-[105px] shrink-0 border-l border-[#9dbcf2] bg-gradient-to-r from-[#dfecff] via-[#c4dafa] to-[#7fa6e2] pr-[2px] pt-[3px] leading-[14px]">
          <div className="mx-[2px] border-t-2 border-dotted border-[#3c5f9e]" />
          <div className="mt-[3px] flex h-[214px] flex-col">
            {tools.map((t) => (
              <button
                key={t.label}
                disabled={t.disabled}
                className={`flex min-h-0 w-full flex-1 items-center gap-[2px] whitespace-nowrap border px-px ${
                  t.active ? "border-[#b9b8ad]" : "border-transparent"
                } ${t.disabled ? "text-[#8d99ad]" : ""}`}
              >
                <Icon name={t.icon} className="size-[12px]" />
                <span className="flex-1 text-left">{t.label}</span>
                {t.menu && <Caret className={t.disabled ? "text-[#8090b0]" : "text-[#10203c]"} />}
              </button>
            ))}
          </div>
          <div className="mx-[2px] my-[2px] h-px bg-[#7fa3dc] shadow-[0_1px_0_#eef5ff]" />
          <button disabled className="flex h-[18px] w-full items-center gap-[2px] pl-[2px] text-[#8d99ad]">
            <Icon name="clip" className="size-[12px]" />
            Klipp ut
          </button>
          <button disabled className="flex h-[18px] w-full items-center gap-[2px] border border-[#2a3f8a] bg-gradient-to-r from-[#ffce94] to-[#ff8c4c] pl-px text-[#a08878]">
            <Icon name="printOff" className="size-[12px]" />
            Skriv ut
          </button>
        </aside>

        {/* Document window */}
        <main className="flex min-w-0 flex-1 flex-col border-l-[3px] border-t-[3px] border-[#6f6c62] bg-white">
          <div className="flex h-[13px] shrink-0 border-t border-[#3b3a35]">
            <div className="flex w-[14px] shrink-0 items-center justify-center border border-[#8d8a7d] bg-[#ece9d8]">
              <Icon name="props" className="size-[11px]" />
            </div>
            <TopRuler />
          </div>
          <div className="flex min-h-0 flex-1">
            <SideRuler />
            <div className="flex min-w-0 flex-1 flex-col">
              <div className="relative min-h-0 flex-1 overflow-hidden">
                <LabelSheet />
              </div>
              <div className="flex h-[6px] shrink-0 items-start overflow-hidden bg-[#f3f2ea] pl-[2px]">
                <button aria-label="Rull til venstre" className={`${scrollButton} h-4 w-[14px] shrink-0`}>
                  <Chevron up className="mb-1 h-[4px] w-[6px]" />
                </button>
                <span className="flex-1" />
                <span className="h-4 w-[8px] shrink-0 rounded-[2px] border border-[#9ab5ee] bg-[#c3d4fb]" />
                <span className="flex-1" />
                <button aria-label="Rull til høyre" className={`${scrollButton} h-4 w-[14px] shrink-0`}>
                  <Chevron up className="mb-1 h-[4px] w-[6px]" />
                </button>
              </div>
            </div>
            <div className="flex w-[17px] shrink-0 flex-col items-center bg-gradient-to-r from-[#f0efe9] to-[#fdfdfa] pb-[7px]">
              <button aria-label="Rull opp" className={`${scrollButton} h-[17px] w-[15px]`}>
                <Chevron up />
              </button>
              <span className="flex-1" />
              <span className="h-[9px] w-[15px] rounded-[2px] border border-[#9ab5ee] bg-[#c3d4fb]" />
              <span className="flex-1" />
              <button aria-label="Rull ned" className={`${scrollButton} h-[17px] w-[15px]`}>
                <Chevron />
              </button>
            </div>
          </div>
        </main>
        <div className="w-[4px] shrink-0 bg-[#ece9d8]" />

        {/* Arrange tools */}
        <aside className="w-[18px] shrink-0">
          <div role="toolbar" aria-label="Ordne" className="flex flex-col items-center bg-gradient-to-r from-[#d9e8fd] to-[#8fb3ea] pt-[3px]">
            <span className="mb-px w-3 border-t-2 border-dotted border-[#3c5f9e]" />
            {rightTools.map((n, i) =>
              n === "|" ? (
                <span key={i} className="my-px h-px w-3 bg-[#7fa3dc]" />
              ) : (
                <button key={n} aria-label={n} className="flex h-4 w-full items-center justify-center">
                  <Icon name={n} className="size-[12px]" />
                </button>
              )
            )}
            <button aria-label="Flere ordneknapper" className="flex h-2 w-full items-center justify-end bg-gradient-to-r from-[#79a4ea] to-[#0b3a9b] pr-1">
              <Caret className="text-white" />
            </button>
          </div>
        </aside>
      </div>

      <RectangleDialog />
    </div>
  );
}
